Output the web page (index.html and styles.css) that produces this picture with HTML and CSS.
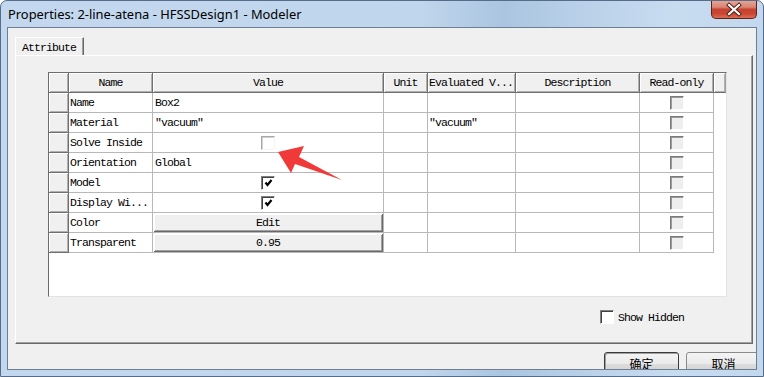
FILE: index.html
```html
<!DOCTYPE html>
<html>
<head>
<meta charset="utf-8">
<title>Properties</title>
<link rel="stylesheet" href="styles.css">
</head>
<body>
<div class="window">
  <div class="titlebar">
    <span class="title">Properties: 2-line-atena - HFSSDesign1 - Modeler</span>
    <div class="close">
      <svg width="44" height="17" viewBox="0 0 44 17">
        <path d="M17 4 L27 13 M27 4 L17 13" stroke="#4a1a12" stroke-width="4" stroke-linecap="square"/>
        <path d="M17 4 L27 13 M27 4 L17 13" stroke="#ffffff" stroke-width="2.2" stroke-linecap="square"/>
      </svg>
    </div>
  </div>
  <div class="client">
    <div class="tabs"><div class="tab">Attribute</div></div>
    <div class="panel">
      <div class="grid">
        <div class="row">
          <div class="hc"></div><div class="hc">Name</div><div class="hc">Value</div><div class="hc">Unit</div><div class="hc left">Evaluated V...</div><div class="hc">Description</div><div class="hc">Read-only</div><div class="hc filler"></div>
        </div>
        <div class="row">
          <div class="rh"></div><div class="c">Name</div><div class="c v">Box2</div><div class="c"></div><div class="c"></div><div class="c"></div><div class="c mid"><span class="cb dis"></span></div><div class="f"></div>
        </div>
        <div class="row">
          <div class="rh"></div><div class="c">Material</div><div class="c v">"vacuum"</div><div class="c"></div><div class="c">"vacuum"</div><div class="c"></div><div class="c mid"><span class="cb dis"></span></div><div class="f"></div>
        </div>
        <div class="row">
          <div class="rh"></div><div class="c">Solve Inside</div><div class="c mid"><span class="cb light"></span></div><div class="c"></div><div class="c"></div><div class="c"></div><div class="c mid"><span class="cb dis"></span></div><div class="f"></div>
        </div>
        <div class="row">
          <div class="rh"></div><div class="c">Orientation</div><div class="c v">Global</div><div class="c"></div><div class="c"></div><div class="c"></div><div class="c mid"><span class="cb dis"></span></div><div class="f"></div>
        </div>
        <div class="row">
          <div class="rh"></div><div class="c">Model</div><div class="c mid"><span class="cb"><svg width="11" height="11" viewBox="0 0 11 11"><path d="M2.5 5.5 L4.5 8 L8.5 3" fill="none" stroke="#000" stroke-width="2.2"/></svg></span></div><div class="c"></div><div class="c"></div><div class="c"></div><div class="c mid"><span class="cb dis"></span></div><div class="f"></div>
        </div>
        <div class="row">
          <div class="rh"></div><div class="c">Display Wi...</div><div class="c mid"><span class="cb"><svg width="11" height="11" viewBox="0 0 11 11"><path d="M2.5 5.5 L4.5 8 L8.5 3" fill="none" stroke="#000" stroke-width="2.2"/></svg></span></div><div class="c"></div><div class="c"></div><div class="c"></div><div class="c mid"><span class="cb dis"></span></div><div class="f"></div>
        </div>
        <div class="row">
          <div class="rh"></div><div class="c">Color</div><div class="c btncell"><span class="cellbtn">Edit</span></div><div class="c"></div><div class="c"></div><div class="c"></div><div class="c mid"><span class="cb dis"></span></div><div class="f"></div>
        </div>
        <div class="row">
          <div class="rh"></div><div class="c">Transparent</div><div class="c btncell"><span class="cellbtn">0.95</span></div><div class="c"></div><div class="c"></div><div class="c"></div><div class="c mid"><span class="cb dis"></span></div><div class="f"></div>
        </div>
      </div>
      <div class="showrow"><span class="cb"></span><span class="showlabel">Show Hidden</span></div>
    </div>
    <div class="buttons">
      <div class="btn default">确定</div>
      <div class="btn">取消</div>
    </div>
  </div>
  <svg class="arrow" width="764" height="377" viewBox="0 0 764 377">
    <polygon points="278,152 304,146 299,157 342,180 295,164 291,173" fill="#f03a3a"/>
  </svg>
</div>
</body>
</html>
```

FILE: styles.css
```css
html, body {
  margin: 0;
  padding: 0;
  background: #ffffff;
}

.window {
  position: relative;
  width: 764px;
  height: 377px;
  box-sizing: border-box;
  border: 1px solid #566d8a;
  border-radius: 7px 7px 0 0;
  background: linear-gradient(to right, #c3d8ee 0%, #c0d6ec 55%, #abc5e0 66%, #b6cee7 74%, #c8dcf0 88%, #c2d8ee 100%);
  display: flex;
  flex-direction: column;
  overflow: hidden;
}

.titlebar {
  flex: none;
  height: 26px;
  display: flex;
  align-items: flex-start;
  padding: 0 6px 0 7px;
}

.title {
  font: 12.9px "Noto Sans", "Open Sans", sans-serif;
  color: #000;
  line-height: 27px;
}

.close {
  margin-left: auto;
  margin-top: -1px;
  width: 46px;
  height: 19px;
  box-sizing: border-box;
  border: 1px solid #5d2219;
  border-top: none;
  border-radius: 0 0 5px 5px;
  background: linear-gradient(#e8a99a 0%, #d98472 40%, #c54431 52%, #c84632 75%, #dc6d55 100%);
  display: flex;
  align-items: center;
  justify-content: center;
}

.client {
  flex: 1;
  margin: 0 6px 6px 6px;
  border: 1px solid #6e7f94;
  background: #f0f0f0;
  display: flex;
  flex-direction: column;
  overflow: hidden;
}

.tabs {
  flex: none;
  display: flex;
  padding: 9px 0 0 7px;
  height: 18px;
  position: relative;
  z-index: 1;
}

.tab {
  width: 69px;
  height: 18px;
  box-sizing: border-box;
  border-left: 1px solid #ffffff;
  border-top: 1px solid #ffffff;
  border-right: 1px solid #696969;
  box-shadow: inset -1px 0 0 #a0a0a0;
  background: #f0f0f0;
  font: 11.5px "Liberation Mono", monospace;
  letter-spacing: -0.9px;
  padding: 3px 0 0 6px;
  color: #000;
}

.panel {
  flex: none;
  margin: 0 3px 0 7px;
  height: 289px;
  box-sizing: border-box;
  border-top: 1px solid #ffffff;
  border-left: 1px solid #ffffff;
  border-right: 1px solid #696969;
  border-bottom: 1px solid #696969;
  box-shadow: inset -1px -1px 0 #a0a0a0;
  padding: 16px 0 0 32px;
  display: flex;
  flex-direction: column;
}

.grid {
  flex: none;
  width: 679px;
  height: 225px;
  box-sizing: border-box;
  border: 1px solid;
  border-color: #6d6d6d #e3e3e3 #e3e3e3 #6d6d6d;
  background: #ffffff;
  font: 11.5px "Liberation Mono", monospace;
  letter-spacing: -0.9px;
  color: #000;
}

.row {
  display: grid;
  grid-template-columns: 20px 84px 231px 44px 88px 124px 74px 12px;
  height: 20px;
}

.hc, .rh {
  box-sizing: border-box;
  background: #f0f0f0;
  border-right: 1px solid #6f6f6f;
  border-bottom: 1px solid #6f6f6f;
  box-shadow: inset 1px 1px 0 #ffffff, inset -1px -1px 0 #b0b0b0;
  display: flex;
  align-items: center;
  justify-content: center;
  white-space: nowrap;
  overflow: hidden;
}

.hc.left {
  justify-content: flex-start;
  padding-left: 1px;
}

.hc.filler {
  border-right: 1px solid #a0a0a0;
}

.c {
  box-sizing: border-box;
  border-right: 1px solid #b8b8b8;
  border-bottom: 1px solid #b8b8b8;
  display: flex;
  align-items: center;
  padding-left: 1px;
  white-space: nowrap;
  overflow: hidden;
}

.c.v {
  padding-left: 2px;
}

.c.mid {
  justify-content: center;
  padding-left: 0;
}

.f {
  background: #fff;
}

.cb {
  flex: none;
  width: 14px;
  height: 14px;
  box-sizing: border-box;
  border: 1px solid;
  border-color: #808080 #ffffff #ffffff #808080;
  box-shadow: inset 1px 1px 0 #404040;
  background: #ffffff;
  display: inline-flex;
  align-items: center;
  justify-content: center;
}

.cb.light {
  border-color: #a8a8a8 #f4f4f4 #f4f4f4 #a8a8a8;
  box-shadow: inset 1px 1px 0 #d0d0d0;
}

.cb.dis {
  background: #eeeeee;
  border-color: #7a7a7a #ffffff #ffffff #7a7a7a;
  box-shadow: inset 1px 1px 0 #9a9a9a;
}

.btncell {
  padding: 1px 0 0 1px;
  align-items: flex-start;
}

.cellbtn {
  width: 100%;
  height: 18px;
  box-sizing: border-box;
  background: #f0f0f0;
  border-right: 1px solid #696969;
  border-bottom: 1px solid #696969;
  box-shadow: inset 1px 1px 0 #ffffff, inset -1px -1px 0 #a0a0a0;
  display: flex;
  align-items: center;
  justify-content: center;
}

.showrow {
  flex: none;
  display: flex;
  align-items: center;
  margin: 13px 0 0 552px;
  font: 11.5px "Liberation Mono", monospace;
  letter-spacing: -0.9px;
  color: #000;
}

.showlabel {
  margin-left: 4px;
}

.buttons {
  flex: none;
  display: flex;
  gap: 7px;
  margin: 8px 0 0 596px;
}

.btn {
  flex: none;
  width: 75px;
  height: 23px;
  box-sizing: border-box;
  border: 1px solid #8a8a8a;
  border-radius: 3px;
  background: linear-gradient(#f4f4f4 0%, #ebebeb 50%, #dddddd 51%, #cfcfcf 100%);
  font: 12px "Noto Sans CJK SC", sans-serif;
  color: #000;
  display: flex;
  align-items: center;
  justify-content: center;
}

.btn.default {
  border: 1px solid #3c3c3c;
  box-shadow: inset 1px 1px 0 #a0a0a0;
}

.arrow {
  position: absolute;
  left: -1px;
  top: -1px;
  pointer-events: none;
}
```
